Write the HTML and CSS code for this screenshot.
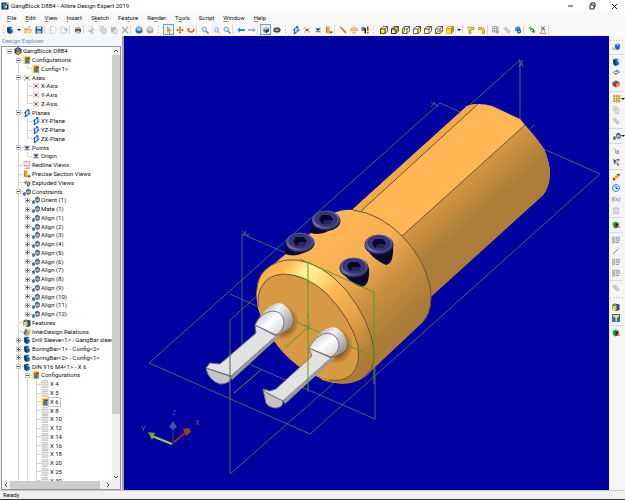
FILE: index.html
```html
<!DOCTYPE html>
<html lang="en">
<head>
  <meta charset="UTF-8" />
  <meta name="viewport" content="width=device-width, initial-scale=1.0"/>
  <title>GangBlock D8B4 - Alibre Design Expert 2019</title>
  <link rel="stylesheet" href="styles.css">
</head>

<body>
  <!-- icon set, all on a 16 unit grid -->
  <svg class="sprite" xmlns="http://www.w3.org/2000/svg">
    <symbol id="i-part" viewBox="0 0 16 16"><path d="M2 3l6-2 5 2-3 3 4 2-1 6-5 2-5-3z" fill="#1766b5"/><path d="M2 3l5 2 1 11-5-3z" fill="#0c3c78"/><path d="M7 5l6-2-3 3z" fill="#55b1ee"/></symbol>
    <symbol id="i-asm" viewBox="0 0 16 16"><path d="M8 0l7 4v8l-7 4-7-4V4z" fill="#27405f"/><path d="M8 2l5 3-5 3-5-3z" fill="#3f8fd0"/><path d="M5 8l4 1 4-3v5l-5 4-4-3z" fill="#ef8a1d"/></symbol>
    <symbol id="i-app" viewBox="0 0 16 16"><path d="M1 1h14v14H1z" fill="#10254f"/><path d="M3 5l4-3 5 3-2 9-5-1z" fill="#2f7fd8"/><path d="M9 1h6v6z" fill="#ffe14a"/><path d="M7 9l5-2-1 6z" fill="#fff"/></symbol>
    <symbol id="i-config" viewBox="0 0 16 16"><path d="M1 0h14v16H1z" fill="#ffe11e"/><path d="M4 2h9v13H4z" fill="#2a7fd0"/><path d="M4 2h9v5H4z" fill="#ee6a26"/><path d="M8 4h5v2H8z" fill="#3c3c3c"/></symbol>
    <symbol id="i-off" viewBox="0 0 16 16"><path d="M2 1h12v14H2zM8 1v14M2 5h12M5 8v5M11 8v5" fill="#f4f4f4" stroke="#a5a5a5"/></symbol>
    <symbol id="i-axes" viewBox="0 0 16 16"><path d="M2 3l12 10" stroke="#e0605c" stroke-width="1.6"/><path d="M2 13L14 3" stroke="#5fb070" stroke-width="1.6"/><path d="M8 1v14M1 8h14" stroke="#d8a0a0" /><circle cx="8" cy="8" r="2" fill="#444"/></symbol>
    <symbol id="i-plane" viewBox="0 0 16 16"><path d="M5 5l7-3v9l-7 3z" fill="#c8dcff" stroke="#1c5bea" stroke-width="2"/><path d="M2 8l4-2M11 10l4-2M8 1l5-1M3 15l4 0" stroke="#1c5bea" stroke-width="2"/></symbol>
    <symbol id="i-point" viewBox="0 0 16 16"><path d="M2 2h12v12H2z" fill="#d5dcec"/><path d="M5 5l6 6M11 5l-6 6" stroke="#1c2b50" stroke-width="2.6"/></symbol>
    <symbol id="i-red" viewBox="0 0 16 16"><path d="M2 1h12v8H2zM2 11l4-2 3 5 5-3M5 4h6M3 15h11" fill="none" stroke="#e88a8a" stroke-width="1.6"/></symbol>
    <symbol id="i-section" viewBox="0 0 16 16"><path d="M2 1h7v9h5v5H5L2 12z" fill="#f3a32a"/><path d="M2 1l2 2v12l-2-3z" fill="#c47a18"/><path d="M10 11h5v3h-5z" fill="#2c66c8"/></symbol>
    <symbol id="i-explode" viewBox="0 0 16 16"><path d="M1 7l5-4 4 3-5 4z" fill="#888"/><path d="M7 10l4-5 4 3-2 6-4 1z" fill="#4b4b4b"/><circle cx="11" cy="10" r="1.8" fill="#ddd"/></symbol>
    <symbol id="i-con" viewBox="0 0 16 16"><path d="M0 10l4-2 3 3-2 4-4 1z" fill="#1f5fd0"/><path d="M6 4l5-3 5 4-1 7-5 2-3-3z" fill="#2366cf"/><circle cx="11" cy="8" r="3.2" fill="#f3a535"/><path d="M3 12l6-4" stroke="#f0a030" stroke-width="2"/></symbol>
    <symbol id="i-feat" viewBox="0 0 16 16"><path d="M1 3l5-2 9 2v11l-6 2-8-3z" fill="#26477f"/><path d="M2 6h7v8H2z" fill="#f7d52f"/><path d="M4 6c0-4 4-4 4 0" fill="none" stroke="#ccc" stroke-width="1.6"/></symbol>
    <symbol id="i-inter" viewBox="0 0 16 16"><path d="M1 9l5-8 3 3-2 8-4 3z" fill="#2e79d2"/><path d="M7 8l6-7 2 6-4 8-6 1z" fill="#f59b24"/><path d="M9 7l4-4v5z" fill="#ffdd55"/></symbol>
    <symbol id="i-open" viewBox="0 0 16 16"><path d="M1 4h5l1 2h7v8H1z" fill="#e0a648"/><path d="M3 8h13l-3 6H1z" fill="#ffe09a" stroke="#e0a648"/><path d="M8 4c1-3 4-3 5-1" fill="none" stroke="#4a86c6" stroke-width="1.5"/></symbol>
    <symbol id="i-save" viewBox="0 0 16 16"><path d="M1 1h14v14H1z" fill="#2f5d90"/><path d="M4 1h8v5H4z" fill="#cfe4f7"/><path d="M4 9h8v6H4z" fill="#a6c6e4"/></symbol>
    <symbol id="i-doc" viewBox="0 0 16 16"><path d="M3 1h8l3 3v7l-5 4H3z" fill="#fff" stroke="#bbb" stroke-width="1.4"/><path d="M1 8h5" stroke="#bbb" stroke-width="2"/></symbol>
    <symbol id="i-docb" viewBox="0 0 16 16"><path d="M2 2h8l2 3v9H2z" fill="#fff" stroke="#b3bcc8" stroke-width="1.4"/><path d="M7 7c3-4 6-3 7 0l1-2v5h-5l2-2c-1-2-3-2-4 0z" fill="#7fb0df"/></symbol>
    <symbol id="i-print" viewBox="0 0 16 16"><path d="M2 6h12v6H2z" fill="#555"/><path d="M4 3h8v3H4zM4 10h8v4H4z" fill="#ddd" stroke="#777"/></symbol>
    <symbol id="i-cut" viewBox="0 0 16 16"><path d="M8 1v9M3 11l10-5" stroke="#aaa" stroke-width="1.8"/><circle cx="3.500" cy="10" r="2" fill="none" stroke="#aaa" stroke-width="1.5"/><circle cx="8" cy="13" r="2" fill="none" stroke="#aaa" stroke-width="1.5"/></symbol>
    <symbol id="i-copy" viewBox="0 0 16 16"><path d="M2 1h7v9H2z" fill="#e9e9e9" stroke="#aaa"/><path d="M6 5h8v10H6z" fill="#ddd" stroke="#aaa"/></symbol>
    <symbol id="i-paste" viewBox="0 0 16 16"><path d="M2 2h10v11H2z" fill="#bcbcbc"/><path d="M7 6h7v9H7z" fill="#eee" stroke="#999"/></symbol>
    <symbol id="i-del" viewBox="0 0 16 16"><path d="M2 2l12 12M14 2L2 14" stroke="#a9a9a9" stroke-width="2.6"/></symbol>
    <symbol id="i-undo" viewBox="0 0 16 16"><circle cx="8" cy="8" r="7" fill="#1f62b8"/><path d="M2 7a6 6 0 0 1 12 0z" fill="#7db8ee"/><path d="M4 8h8" stroke="#fff" stroke-width="2"/></symbol>
    <symbol id="i-redo" viewBox="0 0 16 16"><circle cx="8" cy="8" r="7" fill="#a2a2a2"/><path d="M2 7a6 6 0 0 1 12 0z" fill="#cfcfcf"/><path d="M4 8h8" stroke="#eee" stroke-width="2"/></symbol>
    <symbol id="i-arrow" viewBox="0 0 16 16"><path d="M4 0l9 9-4 1 2 5-2 1-3-5-2 3z" fill="#f59416"/></symbol>
    <symbol id="i-move" viewBox="0 0 16 16"><path d="M8 0l3 4H9v3h3V5l4 3-4 3V9H9v3h2l-3 4-3-4h2V9H4v2L0 8l4-3v2h3V4H5z" fill="#e0611d"/></symbol>
    <symbol id="i-rot" viewBox="0 0 16 16"><path d="M2 6c0 8 12 8 12 0" fill="none" stroke="#e0611d" stroke-width="3"/><path d="M0 7l3-4 3 4z" fill="#e0611d"/></symbol>
    <symbol id="i-zoom" viewBox="0 0 16 16"><circle cx="6.500" cy="6.500" r="4.500" fill="#dcebf8" stroke="#7b8fa5" stroke-width="1.8"/><path d="M10 10l5 5" stroke="#777" stroke-width="2.4"/></symbol>
    <symbol id="i-zoomw" viewBox="0 0 16 16"><path d="M1 1h11v11H1z" fill="none" stroke="#9ab" stroke-dasharray="2 2"/><circle cx="9" cy="8" r="4" fill="#dcebf8" stroke="#7ba0c5" stroke-width="1.6"/><path d="M12 11l4 4" stroke="#c9863c" stroke-width="2"/></symbol>
    <symbol id="i-back" viewBox="0 0 16 16"><path d="M0 8l6-5v3h10v4H6v3z" fill="#2d8fd0"/></symbol>
    <symbol id="i-fwd" viewBox="0 0 16 16"><path d="M16 8l-6-5v3H0v4h10v3z" fill="#b5b5b5"/></symbol>
    <symbol id="i-shade" viewBox="0 0 16 16"><path d="M2 5l7-3 5 3-1 6-6 3-4-3z" fill="#777"/><path d="M2 5l7-3 5 3-6 3z" fill="#c5c5c5"/><path d="M8 8l6-3-1 6-5 3z" fill="#383838"/></symbol>
    <symbol id="i-wire" viewBox="0 0 16 16"><path d="M1 5l4-2h7l3 3v4l-3 3H5l-4-2z" fill="#4a4a4a"/><path d="M5 6h6v4H5z" fill="#aaa"/></symbol>
    <symbol id="i-meas" viewBox="0 0 16 16"><path d="M1 2l3-1 11 11-2 3z" fill="#b5651d"/><path d="M3 2l11 11" stroke="#e9b36b"/></symbol>
    <symbol id="i-scale" viewBox="0 0 16 16"><path d="M8 1v13M3 4h10M4 14h8M0 9l3-5 3 5zM10 9l3-5 3 5z" fill="#ffe5b0" stroke="#e79a2d" stroke-width="1.6"/></symbol>
    <symbol id="i-check" viewBox="0 0 16 16"><path d="M1 2h7v8H1z" fill="#777"/><path d="M7 4h3v11H7z" fill="#222"/><path d="M12 1h3v9h-3zM12 12h3v3h-3z" fill="#e02a22"/></symbol>
    <symbol id="i-cube" viewBox="0 0 16 16"><path d="M1 6h9v9H1zM1 6l5-5h9l-5 5M15 1v9l-5 5" fill="#fff" stroke="#222" stroke-width="1.4"/></symbol>
    <symbol id="i-cube1" viewBox="0 0 16 16"><use href="#i-cube"/><path d="M1 6h9v9H1z" fill="#ffef1c" stroke="#222" stroke-width="1.4"/></symbol>
    <symbol id="i-cube2" viewBox="0 0 16 16"><use href="#i-cube"/><path d="M6 2h8v8H6z" fill="#ffef1c" stroke="#222"/><path d="M1 6h9v9H1z" fill="none" stroke="#222" stroke-width="1.400"/></symbol>
    <symbol id="i-cube3" viewBox="0 0 16 16"><use href="#i-cube"/><path d="M1 6l4-5v9l-4 5z" fill="#ffef1c" stroke="#222"/></symbol>
    <symbol id="i-cube4" viewBox="0 0 16 16"><use href="#i-cube"/><path d="M10 6l5-5v9l-5 5z" fill="#ffef1c" stroke="#222"/></symbol>
    <symbol id="i-cube5" viewBox="0 0 16 16"><use href="#i-cube"/><path d="M1 6l5-5h9l-5 5z" fill="#ffef1c" stroke="#222"/></symbol>
    <symbol id="i-cube6" viewBox="0 0 16 16"><use href="#i-cube"/><path d="M1 15l5-5h9l-5 5z" fill="#ffef1c" stroke="#222"/></symbol>
    <symbol id="i-cube7" viewBox="0 0 16 16"><path d="M1 5l4-4h10l-4 4z" fill="#fff27a" stroke="#b53b12"/><path d="M1 5h10v10H1z" fill="#ffe600" stroke="#b58a00"/><path d="M11 5l4-4v9l-4 5z" fill="#c99b00" stroke="#7a5b00"/></symbol>
    <symbol id="i-bend" viewBox="0 0 16 16"><path d="M4 15V7l3-4h7v4h-5L8 9v6z" fill="#efd90e" stroke="#6d6410"/><path d="M1 4l3-3" stroke="#333" stroke-width="2"/></symbol>
    <symbol id="i-bend2" viewBox="0 0 16 16"><path d="M1 3h8l4 4v8H9V9L7 7H1z" fill="#efd90e" stroke="#6d6410"/></symbol>
    <symbol id="i-grid" viewBox="0 0 16 16"><path d="M1 1h11v11H1zM5 1v11M9 1v11M1 5h11M1 9h11" fill="none" stroke="#999" stroke-width="1.500"/><circle cx="11" cy="12" r="3.500" fill="#aaa"/></symbol>
    <symbol id="i-gray" viewBox="0 0 16 16"><path d="M1 5l5-3 4 3-4 4zM6 10l5-3 4 3-4 5z" fill="#cdcdcd" stroke="#aaa"/></symbol>
    <symbol id="i-cloud" viewBox="0 0 16 16"><path d="M2 7c0-7 10-8 11-2v5H2z" fill="#3485e0"/><circle cx="10" cy="11" r="4" fill="#274a78"/><circle cx="10" cy="11" r="1.500" fill="#fff"/></symbol>
    <symbol id="i-green" viewBox="0 0 16 16"><path d="M1 3l4-2 10 10-3 4z" fill="#5fc25f"/><path d="M4 7l6-2 3 5-5 3z" fill="#2b4b34"/><circle cx="8" cy="9" r="2" fill="#fff"/></symbol>
    <symbol id="i-flask" viewBox="0 0 16 16"><path d="M4 1l8 7M12 1L4 8" stroke="#3f65a5" stroke-width="2"/><path d="M8 6l6 9H2z" fill="#fff" stroke="#ee8a5a" stroke-width="2"/></symbol>
    <symbol id="i-newpart" viewBox="0 0 16 16"><path d="M6 3l6-2 4 2-1 9-5 2-4-3z" fill="#1b63ad"/><path d="M7 4l5-2 3 1-4 3z" fill="#69b5f2"/><path d="M0 9h7v5H0z" fill="#f3c06a"/></symbol>
    <symbol id="i-mirror" viewBox="0 0 16 16"><path d="M2 9c0-4 5-5 8-4l-1-3 6 4-5 3" fill="none" stroke="#555" stroke-width="1.600"/><path d="M4 9l5-1v4z" fill="#333"/></symbol>
    <symbol id="i-box" viewBox="0 0 16 16"><path d="M8 1l7 4v6l-7 4-7-4V5z" fill="#9c3c12"/><path d="M8 1l7 4-7 3-7-3z" fill="#2f6fb3"/><path d="M8 8l7-3v6l-7 4z" fill="#f28a20"/></symbol>
    <symbol id="i-pattern" viewBox="0 0 16 16"><path d="M1 1h3v3H1zM6 1h3v3H6zM11 1h3v3h-3zM1 6h3v3H1zM6 6h3v3H6zM11 6h3v3h-3zM1 11h3v3H1zM6 11h3v3H6zM11 11h3v3h-3z" fill="#f5dc1d" stroke="#8a7d20"/></symbol>
    <symbol id="i-clip" viewBox="0 0 16 16"><path d="M3 3l4 2v7l6 1V6" fill="none" stroke="#999" stroke-width="1.600"/><path d="M9 6h5v7H9z" fill="#9aabc6"/></symbol>
    <symbol id="i-tri" viewBox="0 0 16 16"><path d="M2 2l7 3-4 9z" fill="#1d62ac"/><path d="M9 2h6v3H9zM10 11h4v4h-4z" fill="#d8432c"/><path d="M8 13l5-8" stroke="#555"/></symbol>
    <symbol id="i-key" viewBox="0 0 16 16"><path d="M2 14l6-10 6-3 1 6-6 4-3 4z" fill="#e8b51e"/><path d="M2 8l5 6-5 1z" fill="#b92a1c"/><path d="M9 3l6-2v5z" fill="#3b4a30"/></symbol>
    <symbol id="i-clock" viewBox="0 0 16 16"><circle cx="8" cy="8" r="7" fill="#d8eeff" stroke="#2c8ddd" stroke-width="2"/><path d="M8 4v5h4" fill="none" stroke="#19508c" stroke-width="2"/></symbol>
    <symbol id="i-trash" viewBox="0 0 16 16"><path d="M3 5h10v10H3zM1 4h14M6 2h4M6 7v6M10 7v6" fill="#eee" stroke="#bbb" stroke-width="1.500"/></symbol>
    <symbol id="i-mix" viewBox="0 0 16 16"><path d="M1 4l6-3 7 3-2 9-6 2-4-4z" fill="#2d9a36"/><path d="M7 5l6 1-1 6-5 1z" fill="#222"/><path d="M10 9h5v5h-5z" fill="#e76a31"/></symbol>
    <symbol id="i-pair" viewBox="0 0 16 16"><path d="M1 2h5v5H1zM1 9h5v5H1zM9 2h6v8H9z" fill="#ccc" stroke="#888"/><path d="M8 13h6" stroke="#999" stroke-width="2"/></symbol>
    <symbol id="i-wand" viewBox="0 0 16 16"><path d="M2 14L12 4" stroke="#888" stroke-width="2"/><path d="M12 1l3 3" stroke="#bbb" stroke-width="2"/></symbol>
    <symbol id="i-yt" viewBox="0 0 16 16"><path d="M0 0h16v16H0z" fill="#3266d8"/><path d="M2 2h12v3l-4 3v7H7V8L2 5z" fill="#ffdf1f"/></symbol>
  </svg>

  <div class="app">
    <header class="titlebar">
      <svg class="icon"><use href="#i-app"/></svg>
      <h1>GangBlock D8B4 - Alibre Design Expert 2019</h1>
      <div class="win-buttons">
        <button aria-label="Minimize"><svg viewBox="0 0 8 8"><path d="M2 4h5"/></svg></button>
        <button aria-label="Restore"><svg viewBox="0 0 8 8"><path d="M2 3h4v4H2zM3 3V1h4v4H6"/></svg></button>
        <button aria-label="Close"><svg viewBox="0 0 8 8"><path d="M2 2l5 5M7 2L2 7"/></svg></button>
      </div>
    </header>

    <nav class="menubar">
      <a href="#"><u>F</u>ile</a>
      <a href="#"><u>E</u>dit</a>
      <a href="#"><u>V</u>iew</a>
      <a href="#"><u>I</u>nsert</a>
      <a href="#">S<u>k</u>etch</a>
      <a href="#">Fea<u>t</u>ure</a>
      <a href="#">Re<u>n</u>der</a>
      <a href="#">T<u>o</u>ols</a>
      <a href="#">Script</a>
      <a href="#"><u>W</u>indow</a>
      <a href="#"><u>H</u>elp</a>
    </nav>

    <div class="toolbar" id="toolbar"></div>

    <div class="workspace">
      <aside class="explorer">
        <h2>Design Explorer</h2>
        <div class="tree-box">
          <ul class="tree" id="tree"></ul>
          <div class="vscroll">
            <button aria-label="Scroll up"><svg viewBox="0 0 8 8"><path d="M2 5l2-2 2 2"/></svg></button>
            <div class="track"><div class="thumb"></div></div>
            <button aria-label="Scroll down"><svg viewBox="0 0 8 8"><path d="M2 3l2 2 2-2"/></svg></button>
          </div>
          <div class="hscroll">
            <button aria-label="Scroll left"><svg viewBox="0 0 8 8"><path d="M5 2L3 4l2 2"/></svg></button>
            <div class="track"><div class="thumb"></div></div>
            <button aria-label="Scroll right"><svg viewBox="0 0 8 8"><path d="M3 2l2 2-2 2"/></svg></button>
          </div>
        </div>
      </aside>

      <main class="viewport">
        <svg class="model" viewBox="124 36 485 454" xmlns="http://www.w3.org/2000/svg">
          <defs>
            <linearGradient id="shankSide" gradientUnits="userSpaceOnUse" x1="450" y1="175" x2="494" y2="225">
              <stop offset="0" stop-color="#dd9f4b"/><stop offset=".35" stop-color="#c98e40"/><stop offset=".75" stop-color="#ab7d38"/>
            </linearGradient>
            <linearGradient id="bodyFill" gradientUnits="userSpaceOnUse" x1="320" y1="230" x2="402" y2="322">
              <stop offset="0" stop-color="#ffb755"/><stop offset=".4" stop-color="#f7b052"/><stop offset=".68" stop-color="#cb9042"/><stop offset="1" stop-color="#aa7c38"/>
            </linearGradient>
            <linearGradient id="chamfer" gradientUnits="userSpaceOnUse" x1="262" y1="270" x2="372" y2="375">
              <stop offset="0" stop-color="#f9ae4a"/><stop offset=".1" stop-color="#ffb850"/><stop offset=".21" stop-color="#fff39a"/><stop offset=".32" stop-color="#ffe07c"/><stop offset=".43" stop-color="#ffb854"/><stop offset=".65" stop-color="#e3a04a"/><stop offset=".9" stop-color="#ab7b37"/>
            </linearGradient>
            <linearGradient id="steel" x1="0" y1="0" x2="1" y2="1">
              <stop offset="0" stop-color="#9c9c9c"/><stop offset=".35" stop-color="#f2f2f2"/><stop offset="1" stop-color="#777"/>
            </linearGradient>
            <linearGradient id="tip" x1="0" y1="0" x2="1" y2="1">
              <stop offset="0" stop-color="#b5b5b5"/><stop offset=".5" stop-color="#ffffff"/><stop offset="1" stop-color="#c9c9c9"/>
            </linearGradient>
            <radialGradient id="glow"><stop offset=".5" stop-color="#5e3c10" stop-opacity=".7"/><stop offset="1" stop-color="#5e3c10" stop-opacity="0"/></radialGradient>
            <linearGradient id="rim" x1="0" y1="0" x2="1" y2="1"><stop offset="0" stop-color="#3c3c80"/><stop offset=".5" stop-color="#6a6ab0"/><stop offset="1" stop-color="#25255c"/></linearGradient>
            <g id="screwHead">
              <ellipse rx="14.500" ry="10" fill="#171744"/>
              <ellipse cy="-1" rx="14" ry="9.500" fill="url(#rim)"/>
              <ellipse cy="-2" rx="11" ry="7" fill="#37377b" stroke="#20204e" stroke-width=".6"/>
              <path d="M-7-2l3-4h8l3 4-3 5h-8z" fill="#080826"/>
              <path d="M-4 3L-1-1l7 0-2 4z" fill="#25255e"/>
            </g>
          </defs>

          <!-- reference planes behind the part -->
          <g class="plane-line">
            <path d="M440 103L149 363L310 434L600 174L440 103"/>
            <path d="M520 120V60L230 320V474L400 325"/>
            <path d="M242 234V361L375 419V292"/>
            <path d="M242 234L300 259M230 294L270 312"/>
            <path d="M431 107l4-5M431 102l7 4M434 103l4 4M519 59l4 8M523 60l-4 7M519 64h4M242 231l5 4M246 231l-3 5M245 235h5M530 129l4-4"/>
          </g>

          <!-- shank -->
          <path d="M353 209L467 106Q472 104 478 104Q486 104 492 106L520 119L525 125Q535 136 544 149Q550 163 550 174Q549 188 543 195L425 302L340 250Z" fill="#ffb755"/>
          <path d="M525 125Q535 136 544 149Q550 163 550 174Q549 188 543 195L425 302L395 242Z" fill="url(#shankSide)"/>
          <path d="M353 209L467 106Q472 104 478 104L360 212Z" fill="#f0a849"/>
          <path class="edge" d="M478 104L360 212M525 125L402 236"/>

          <!-- clamping body -->
          <path d="M263 273L287 253L312 232L332 214Q342 209 353 210Q381 214 402 236Q424 258 430 286Q434 309 423 322L372 370Q362 383 343 384Q322 382 297 365Q268 342 258 308Q255 285 263 273Z" fill="url(#bodyFill)"/>
          <path class="edge" d="M353 210Q381 214 402 236Q424 258 430 286Q434 309 423 322"/>
          <path d="M258 308Q253 285 264 271Q277 258 297 260Q322 263 346 290Q370 320 374 350Q376 372 357 380Q343 387 322 380Z" fill="url(#chamfer)"/>
          <path class="edge" d="M257 290Q257 279 264 271Q277 258 297 260Q322 263 346 290Q370 320 374 350Q376 370 362 378"/>
          <path d="M258 307Q257 294 262 286Q268 275 283 274Q305 274 326 293Q351 319 358 345Q361 366 351 375Q343 382 329 380Q310 376 297 365Q268 342 258 307Z" fill="#d89945"/>
          <path class="edge" d="M258 307Q257 294 262 286Q268 275 283 274Q305 274 326 293Q351 319 358 345Q361 366 351 375Q343 382 329 380"/>

          <!-- set screws -->
          <path d="M312 218L311 233Q321 236 332 229L340 221Z" fill="#080830"/>
          <path d="M286 241L285 254Q296 258 307 251L315 244Z" fill="#080830"/>
          <path d="M365 245Q370 258 386 265Q394 264 393 245Z" fill="#080830"/>
          <path d="M340 268Q346 281 361 287Q370 286 369 268Z" fill="#080830"/>
          <use href="#screwHead" x="326" y="221"/>
          <use href="#screwHead" x="300" y="243"/>
          <use href="#screwHead" x="379" y="245"/>
          <use href="#screwHead" x="354" y="268"/>

          <!-- boring bars -->
          <ellipse cx="282" cy="322" rx="17" ry="18" fill="url(#glow)"/>
          <ellipse cx="336" cy="346" rx="17" ry="18" fill="url(#glow)"/>
          <path d="M262 314Q271 303 280 303Q290 306 293 319Q293 327 287 330L278 335Z" fill="url(#steel)"/>
          <path d="M255 325L256 333L220 364L210 363L206 368L231 376L276 336Z" fill="#e2e2e2" class="steel-edge"/>
          <path d="M276 336L280 336L232 380L231 376Z" fill="#9a9a9a"/>
          <path d="M255 325Q260 313 272 311Q283 311 284 322Q284 330 276 335Z" fill="url(#tip)" class="steel-edge"/>
          <path d="M206 368L232 377Q230 384 220 384Q208 380 206 368Z" fill="#c4c4c4" class="steel-edge"/>

          <path d="M317 336Q325 327 334 327Q344 330 347 343Q347 351 341 353L333 357Z" fill="url(#steel)"/>
          <path d="M309 348L312 356L276 389L270 391L263 389L267 393L283 401L331 358Z" fill="#e2e2e2" class="steel-edge"/>
          <path d="M331 358L335 358L285 404L283 400Z" fill="#9a9a9a"/>
          <path d="M309 348Q316 334 328 333Q338 335 339 345Q339 352 331 357Z" fill="url(#tip)" class="steel-edge"/>
          <path d="M263 389L267 393L283 401Q283 408 275 408Q268 407 266 403Z" fill="#c4c4c4" class="steel-edge"/>

          <!-- sketch lines in front -->
          <g class="front-line">
            <path d="M308 262V392M300 259L374 292V357L347 345M374 357V384"/>
            <path d="M234 393L262 369M286 347L308 327M294 321L321 333"/>
            <path d="M305 325l5 4M310 324l-3 6M308 314v5"/>
          </g>
          <path class="plane-line" d="M230 350V400"/>

          <!-- orientation triad -->
          <path d="M172 444L152 436" stroke="#9ecb4c" stroke-width="2"/>
          <path d="M148 432l7 1-3 7z" fill="#6ea92b"/>
          <path d="M172 444L185 433" stroke="#8c2f1b" stroke-width="2"/>
          <path d="M183 429l6-1 2 4-5 4z" fill="#9a3d22"/>
          <path d="M173 444V430" stroke="#1c2a5e" stroke-width="2"/>
          <path d="M169 427L173 421l4 6-4 3z" fill="#3a55b0"/>
          <g class="triad-label">
            <text x="141" y="431" fill="#5c8a8a">Y</text>
            <text x="172" y="415" fill="#3a55c8">Z</text>
            <text x="195" y="425" fill="#9a5a78">X</text>
          </g>
        </svg>
      </main>

      <div class="side-tools" id="sideTools"></div>
    </div>

    <footer class="statusbar">Ready</footer>
  </div>

  <script>
    // "|" separator, ":" grip, "v" drop-down arrow, "*" pressed, "+" with its own drop-down
    const toolbarItems = ': part v open save | doc docb | print | cut copy paste del | undo redo : arrow* move rot | zoom zoomw zoom | back fwd | shade* wire : plane axes point section | meas scale check : cube1 cube2 cube3 cube4 cube5 cube6 cube7 v | bend bend2 | grid gray cloud | green flask |';
    const sideItems = ': newpart | part mirror box | pattern+ copy gray | con+ | clip tri | key clock fx trash | mix | pair wand pair pair | gray : feat yt | mix';

    // level, label, icon, expander (+ closed, - open)
    const nodes = [
      [0, 'GangBlock D8B4', 'asm', '-'],
      [1, 'Configurations', 'config', '-'],
      [2, 'Config<1>', 'config'],
      [1, 'Axes', 'axes', '-'],
      [2, 'X-Axis', 'axes'],
      [2, 'Y-Axis', 'axes'],
      [2, 'Z-Axis', 'axes'],
      [1, 'Planes', 'plane', '-'],
      [2, 'XY-Plane', 'plane'],
      [2, 'YZ-Plane', 'plane'],
      [2, 'ZX-Plane', 'plane'],
      [1, 'Points', 'point', '-'],
      [2, 'Origin', 'point'],
      [1, 'Redline Views', 'red'],
      [1, 'Precise Section Views', 'section'],
      [1, 'Exploded Views', 'explode'],
      [1, 'Constraints', 'con', '-'],
      [2, 'Orient (1)', 'con', '+'],
      [2, 'Mate (1)', 'con', '+']
    ];
    for (let i = 1; i <= 12; i++) {
      nodes.push([2, `Align (${i})`, 'con', '+']);
    }
    nodes.push(
      [1, 'Features', 'feat'],
      [1, 'InterDesign Relations', 'inter'],
      [1, 'Drill Sleeve<1> - GangBar sleev', 'part', '+'],
      [1, 'BoringBar<1> - Config<2>', 'part', '+'],
      [1, 'BoringBar<2> - Config<1>', 'part', '+'],
      [1, 'DIN 916 M4<1> - X 6', 'part', '-'],
      [2, 'Configurations', 'config', '-']
    );
    [4, 5, 6, 8, 10, 12, 14, 16, 18, 20, 25, 30].forEach(n => {
      nodes.push([3, 'X ' + n, n === 6 ? 'config' : 'off']);
    });

    const icon = name => `<svg class="icon"><use href="#i-${name}"/></svg>`;

    function buildTools(id, items) {
      document.getElementById(id).innerHTML = items.split(' ').map(item => {
        if (item === '|') return '<span class="sep"></span>';
        if (item === ':') return '<span class="grip"></span>';
        if (item === 'v') return '<button class="drop" aria-label="More"></button>';
        if (item === 'fx') return '<button class="tool fx">f(x)</button>';
        const name = item.replace(/[*+]/, '');
        const state = item.endsWith('*') ? ' pressed' : item.endsWith('+') ? ' has-drop' : '';
        return `<button class="tool${state}" aria-label="${name}">${icon(name)}</button>`;
      }).join('');
    }

    // true when another node of that level follows before the branch ends
    function continues(index, level) {
      for (let i = index + 1; i < nodes.length; i++) {
        if (nodes[i][0] < level) return false;
        if (nodes[i][0] === level) return true;
      }
      return level > 0;
    }

    function buildTree() {
      document.getElementById('tree').innerHTML = nodes.map(([level, label, ico, exp], i) => {
        let row = '';
        for (let k = 0; k < level; k++) {
          row += `<span class="guide${continues(i, k) ? ' line' : ''}"></span>`;
        }
        row += `<span class="guide ${level === 0 ? '' : continues(i, level) ? 'tee' : 'elbow'}">` +
          (exp ? `<button class="expander" aria-label="Toggle">${exp === '+' ? '<i></i>' : ''}<b></b></button>` : '') + '</span>';
        const text = label.replace(/</g, '&lt;');
        return `<li>${row}${icon(ico)}<a href="#" class="${label === 'X 6' ? 'selected' : ''}">${text}</a></li>`;
      }).join('');
    }

    buildTools('toolbar', toolbarItems);
    buildTools('sideTools', sideItems);
    buildTree();
  </script>
</body>
</html>
```
FILE: styles.css
```css
* {
  box-sizing: border-box;
}

body {
  margin: 0;
  font-family: Roboto, sans-serif;
  font-size: 6px;
  color: #111;
}

a {
  color: inherit;
  text-decoration: none;
}

button {
  border: none;
  padding: 0;
  margin: 0;
  background: none;
  font: inherit;
  color: inherit;
}

.sprite {
  display: none;
}

.app {
  display: flex;
  flex-direction: column;
  height: 100vh;
  background-color: #f0f0f0;
  border-bottom: 1px solid #3a3a3a;
}

.icon {
  flex: none;
  width: 8px;
  height: 8px;
}

/* title and menu */
.titlebar {
  display: flex;
  align-items: center;
  flex: none;
  height: 11px;
  padding-left: 1px;
  background-color: #fff;
}

.titlebar h1 {
  margin: 0 auto 0 2px;
  font-size: 6px;
  font-weight: normal;
}

.win-buttons {
  display: flex;
}

.win-buttons button {
  display: flex;
  justify-content: center;
  width: 22px;
}

.win-buttons svg {
  width: 8px;
  height: 8px;
  fill: none;
  stroke: #222;
  stroke-width: 1;
}

.menubar {
  display: flex;
  align-items: center;
  flex: none;
  gap: 9px;
  height: 12px;
  padding: 0 7px;
  background-color: #f9f9f9;
}

.menubar u {
  text-decoration-thickness: 1px;
  text-underline-offset: 1px;
  text-decoration-color: #888;
}

/* toolbars */
.toolbar {
  display: flex;
  align-items: center;
  flex: none;
  height: 13px;
  background: linear-gradient(to right, #f7f7f7 552px, #fafafa 552px);
}

.tool {
  display: flex;
  align-items: center;
  justify-content: center;
  flex: none;
  width: 11px;
  height: 11px;
}

.tool.pressed {
  border: 1px solid #5fa4dc;
  background-color: #e6f2fb;
}

.sep {
  flex: none;
  width: 3px;
  height: 9px;
  border-left: 1px solid #d5d5d5;
}

.grip {
  flex: none;
  width: 8px;
  height: 9px;
  background: radial-gradient(#bbb 1px, transparent 1px) 2px 0 / 3px 3px repeat-y;
}

.grip:first-child {
  width: 4px;
}

.drop {
  display: flex;
  align-items: center;
  justify-content: center;
  width: 7px;
  height: 11px;
}

.drop::after,
.has-drop::after {
  content: "";
  border: 2px solid transparent;
  border-top: 2px solid #111;
  border-bottom: none;
}

.side-tools {
  display: flex;
  flex-direction: column;
  flex: none;
  width: 16px;
  background-color: #f5f5f5;
}

.side-tools .tool {
  width: 14px;
}

.side-tools .has-drop {
  justify-content: flex-end;
  width: 16px;
}

.side-tools .sep {
  width: 14px;
  height: 4px;
  border-left: none;
  background: linear-gradient(#d9d9d9, #d9d9d9) center / 100% 1px no-repeat;
}

.side-tools .grip {
  width: 14px;
  height: 8px;
  background: radial-gradient(#bbb 1px, transparent 1px) 0 3px / 3px 3px repeat-x;
}

.side-tools .grip:first-child {
  height: 5px;
}

.fx {
  font-family: "Liberation Serif", serif;
  font-style: italic;
  color: #555;
}

/* design explorer */
.workspace {
  display: flex;
  flex: 1;
  min-height: 0;
}

.explorer {
  display: flex;
  flex-direction: column;
  flex: none;
  width: 124px;
  padding-right: 1px;
  border-right: 2px solid #a5a5a5;
}

.explorer h2 {
  flex: none;
  height: 10px;
  margin: 0;
  padding-left: 2px;
  background-color: #f4f7fa;
  color: #5f8fc0;
  font-size: 6px;
  font-weight: normal;
  line-height: 9px;
}

.tree-box {
  display: grid;
  grid-template-columns: 1fr 8px;
  grid-template-rows: minmax(0, 1fr) 8px;
  flex: 1;
  min-height: 0;
  margin-left: 1px;
  border: 1px solid #8d949c;
  background-color: #fff;
  overflow: hidden;
}

.tree {
  display: grid;
  grid-auto-rows: 1fr;
  height: calc(100% + 4px);
  margin: 0;
  padding: 0 0 0 3px;
  list-style: none;
  overflow: hidden;
}

.tree li {
  display: flex;
  align-items: center;
  min-height: 0;
  white-space: nowrap;
}

.tree a {
  padding: 0 1px;
  line-height: 8px;
}

.tree a.selected {
  outline: 1px solid #c4c4c4;
}

.guide {
  display: flex;
  align-items: center;
  justify-content: center;
  flex: none;
  width: 9px;
  height: 100%;
}

.line {
  background: linear-gradient(#d4d4d4, #d4d4d4) 4px 0 / 1px 100% no-repeat;
}

.tee {
  background: linear-gradient(#d4d4d4, #d4d4d4) 4px 0 / 1px 100% no-repeat,
    linear-gradient(#d4d4d4, #d4d4d4) 5px 50% / 4px 1px no-repeat;
}

.elbow {
  background: linear-gradient(#d4d4d4, #d4d4d4) 4px 0 / 1px 50% no-repeat,
    linear-gradient(#d4d4d4, #d4d4d4) 5px 50% / 4px 1px no-repeat;
}

.expander {
  display: grid;
  place-items: center;
  width: 5px;
  height: 5px;
  border: 1px solid #c4c4c4;
  background-color: #fff;
}

.expander b,
.expander i {
  grid-area: 1 / 1;
  width: 3px;
  height: 1px;
  background-color: #555;
}

.expander i {
  width: 1px;
  height: 3px;
}

.vscroll,
.hscroll {
  display: flex;
  background-color: #f0f0f0;
}

.vscroll {
  flex-direction: column;
  z-index: 1;
}

.hscroll {
  grid-column: 1 / 3;
  padding-right: 8px;
  z-index: 1;
}

.vscroll button,
.hscroll button {
  display: flex;
  flex: none;
  width: 8px;
  height: 8px;
}

.vscroll svg,
.hscroll svg {
  width: 8px;
  height: 8px;
  fill: none;
  stroke: #444;
}

.track {
  flex: 1;
}

.vscroll .thumb {
  height: 86%;
  background-color: #cdcdcd;
}

.hscroll .thumb {
  width: 96%;
  height: 100%;
  background-color: #cdcdcd;
}

/* 3D view */
.viewport {
  flex: 1;
  min-width: 0;
  background-color: #0000a0;
}

.model {
  display: block;
  width: 100%;
  height: 100%;
}

.plane-line {
  fill: none;
  stroke: #3c6a68;
  stroke-width: 1;
}

.front-line {
  fill: none;
  stroke: #5a9a1c;
  stroke-width: 1;
}

.edge {
  fill: none;
  stroke: #6b5230;
  stroke-width: 1;
}

.steel-edge {
  stroke: #777;
  stroke-width: 1;
}

.triad-label {
  font-family: "Liberation Sans", sans-serif;
  font-size: 7px;
}

.statusbar {
  flex: none;
  height: 9px;
  padding-left: 3px;
  border-top: 1px solid #c8c8c8;
  line-height: 8px;
}
```
